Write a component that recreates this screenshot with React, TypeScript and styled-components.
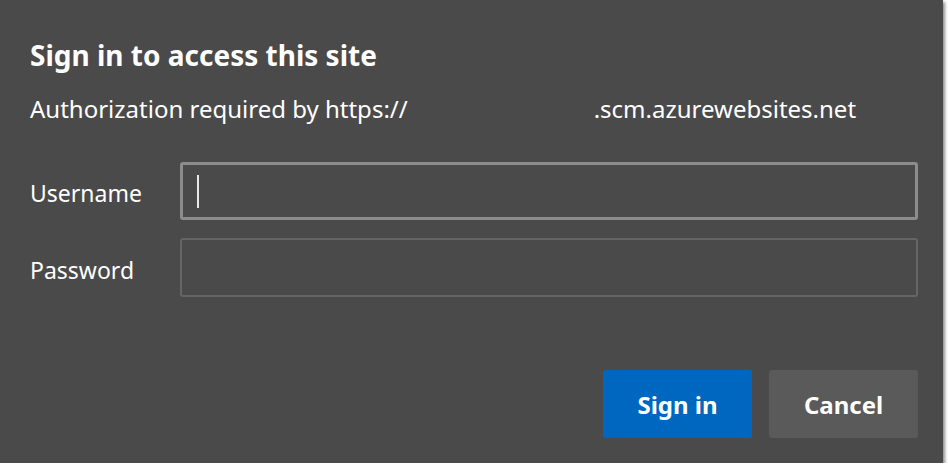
import React from "react";
import styled, { createGlobalStyle } from "styled-components";

const Global = createGlobalStyle`
  html, body { margin: 0; padding: 0; background: #ffffff; }
  body { font-family: "Noto Sans", "Open Sans", sans-serif; }
`;

const Dialog = styled.div`
  box-sizing: border-box;
  width: 943px;
  height: 463px;
  background: #4a4a4a;
  box-shadow: 2px 2px 3px rgba(0, 0, 0, 0.45);
  padding: 35px 25px 25px 30px;
  display: flex;
  flex-direction: column;
  color: #ffffff;
`;

const Title = styled.h1`
  margin: 0;
  font-size: 28px;
  font-weight: 700;
  line-height: 40px;
  white-space: nowrap;
`;

const Subtitle = styled.p`
  margin: 19px 0 0;
  font-size: 24px;
  line-height: 30px;
  white-space: nowrap;
`;

const Redacted = styled.span`
  display: inline-block;
  width: 186px;
`;

const Form = styled.div`
  margin-top: 38px;
  display: grid;
  grid-template-columns: 150px 1fr;
  row-gap: 18px;
  align-items: center;
`;

const Label = styled.label`
  font-size: 23px;
  padding-top: 4px;
`;

const Field = styled.div<{ $focused?: boolean }>`
  box-sizing: border-box;
  height: ${(p) => (p.$focused ? "58px" : "59px")};
  border-radius: 3px;
  border: ${(p) => (p.$focused ? "3px solid #8c8c8c" : "2px solid #656565")};
  background: #4a4a4a;
  display: flex;
  align-items: center;
  padding-left: ${(p) => (p.$focused ? "14px" : "15px")};
`;

const Caret = styled.div`
  width: 2px;
  height: 33px;
  background: #e8e8e8;
`;

const Actions = styled.div`
  margin-top: auto;
  display: flex;
  justify-content: flex-end;
  gap: 17px;
`;

const Button = styled.button<{ $primary?: boolean }>`
  width: 149px;
  height: 68px;
  border: none;
  border-radius: 3px;
  background: ${(p) => (p.$primary ? "#0067c0" : "#5a5a5a")};
  color: #ffffff;
  font-family: inherit;
  font-size: 24px;
  font-weight: 700;
  cursor: pointer;
`;

export default function App() {
  return (
    <>
      <Global />
      <Dialog>
        <Title>Sign in to access this site</Title>
        <Subtitle>
          Authorization required by https://<Redacted />.scm.azurewebsites.net
        </Subtitle>
        <Form>
          <Label>Username</Label>
          <Field $focused>
            <Caret />
          </Field>
          <Label>Password</Label>
          <Field />
        </Form>
        <Actions>
          <Button $primary>Sign in</Button>
          <Button>Cancel</Button>
        </Actions>
      </Dialog>
    </>
  );
}
